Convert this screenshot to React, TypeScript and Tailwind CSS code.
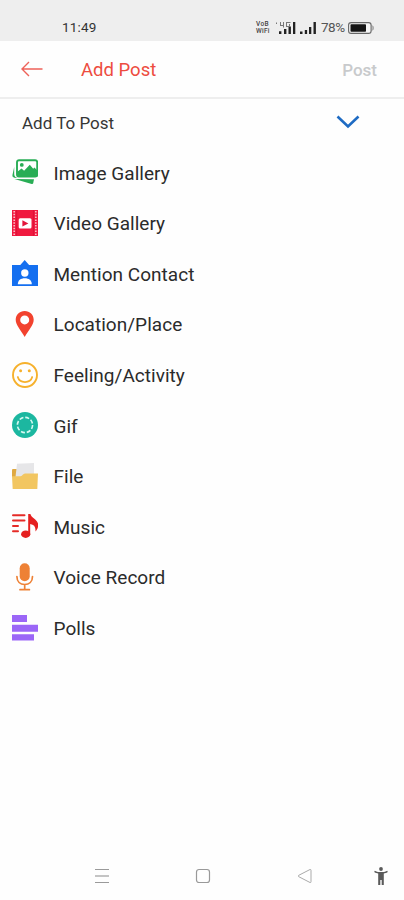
import React from 'react';

const ImageIcon = () => (
  <svg viewBox="0 0 26 26" className="h-[26px] w-[26px]">
    <path d="M2.200 8 .5 15.800c-.4 1.800.4 2.700 2 2.900l3.500.3C3.500 18.500 2.200 17.500 2.200 15z" fill="#28ad55" />
    <path d="M2.500 20 22 20.300 21.200 24.300C21 25 20.400 25.200 19.700 25Z" fill="#28ad55" />
    <rect x="5" y="1.200" width="20.200" height="16.400" rx="2" fill="#fff" stroke="#28ad55" strokeWidth="1.900" />
    <circle cx="9.800" cy="5.900" r="1.900" fill="#28ad55" />
    <path d="M5 13 9.500 9.500l2.600 2.200 5.700-6 3.400 4 1.200-1.100 3 3V18H5z" fill="#28ad55" />
  </svg>
);

const VideoIcon = () => (
  <svg viewBox="0 0 26 26" className="h-[26px] w-[26px]">
    <path d="M0 0h26v26H0z" fill="#f0193f" />
    <path d="M2.200 1v25M23.800 1v25" stroke="#ffb9c5" strokeWidth="1.700" strokeDasharray="1.500 1.300" />
    <path d="M4.600 0v26M21.400 0v26" stroke="#d60f35" strokeWidth=".7" />
    <rect x="6.700" y="8.200" width="12.800" height="10.200" rx="1.500" fill="#fff" />
    <path d="m10.400 10.200 6 3.200-6 3.200z" fill="#e3173c" />
  </svg>
);

const ContactIcon = () => (
  <svg viewBox="0 0 26 26" className="h-[26px] w-[26px]">
    <path d="M0 5h8.300L12.700 0l4.400 5H26v21H0z" fill="#146ff0" />
    <circle cx="12.800" cy="13" r="3.700" fill="#fff" />
    <path d="M5.800 24.300c0-4 3-6 7-6s7 2 7 6z" fill="#fff" />
  </svg>
);

const LocationIcon = () => (
  <svg viewBox="0 0 26 26" className="h-[26px] w-[26px]">
    <path
      fillRule="evenodd"
      d="M12.700 0C7.600 0 3.700 3.800 3.700 8.800c0 5.200 5.200 10.400 9 17.200 3.800-6.800 9-12 9-17.200 0-5-3.900-8.800-9-8.800m0 4.400a4.500 4.500 0 1 1 0 9 4.500 4.500 0 0 1 0-9"
      fill="#f2422e"
    />
  </svg>
);

const SmileIcon = () => (
  <svg viewBox="0 0 26 26" className="h-[26px] w-[26px]" fill="none" stroke="#f6b12d">
    <circle cx="13" cy="13" r="12" strokeWidth="1.900" />
    <path d="M5.800 15c1.900 6.700 12.500 6.700 14.400 0" strokeWidth="1.800" strokeLinecap="round" />
    <circle cx="8.600" cy="8.800" r="1.500" fill="#f6b12d" stroke="none" />
    <circle cx="17.300" cy="8.800" r="1.500" fill="#f6b12d" stroke="none" />
  </svg>
);

const GifIcon = () => (
  <svg viewBox="0 0 26 26" className="h-[26px] w-[26px]">
    <circle cx="13" cy="13" r="13" fill="#1cb7a0" />
    <circle cx="13" cy="13" r="7.600" fill="none" stroke="#d5f8f1" strokeWidth="1.600" strokeDasharray="4.100 1.870" />
  </svg>
);

const FileIcon = () => (
  <svg viewBox="0 0 26 26" className="h-[26px] w-[26px]">
    <path d="M0 7.200C0 6.400.5 6 1.300 6H5v8H0z" fill="#dfa942" />
    <path d="M5 .7 22 0v14H3.500z" fill="#e6e6e8" />
    <path d="M0 13.200h8.500c2 0 2.500-2.700 4.500-2.700h13L25.300 26H.7z" fill="#f2c661" />
  </svg>
);

const MusicIcon = () => (
  <svg viewBox="0 0 26 26" className="h-[26px] w-[26px]">
    <path d="M1 2.200h11.500M1 7.500h11.500M1 13h5M1 18.200h5" stroke="#e52b27" strokeWidth="2" strokeLinecap="round" />
    <ellipse cx="13.700" cy="21.200" rx="4.600" ry="3.700" fill="#e52020" />
    <path d="M16.200 1h2.200c.8 4.200 7.800 5.400 7.800 11 0 2.600-.9 4.600-2.800 6.500.5-4.300-1.200-6.900-5.200-7.400v10.500h-2z" fill="#e52020" />
  </svg>
);

const MicIcon = () => (
  <svg viewBox="0 0 26 28" className="-my-px h-[28px] w-[26px]">
    <rect x="7.700" y=".3" width="10" height="18" rx="5" fill="#ee8135" />
    <path d="M4.900 13.500c0 5 3.300 8 7.800 8s7.800-3 7.800-8M12.700 21.500v5M8 26.700h9.400" fill="none" stroke="#ee8135" strokeWidth="1.700" strokeLinecap="round" />
  </svg>
);

const PollsIcon = () => (
  <svg viewBox="0 0 26 26" className="h-[26px] w-[26px]" fill="#9b66f7">
    <path d="M0 0h15v7H0zM0 9.800h26v6.900H0zM0 19.300h22v6.200H0z" />
  </svg>
);

const options = [
  { label: 'Image Gallery', icon: ImageIcon },
  { label: 'Video Gallery', icon: VideoIcon },
  { label: 'Mention Contact', icon: ContactIcon },
  { label: 'Location/Place', icon: LocationIcon },
  { label: 'Feeling/Activity', icon: SmileIcon },
  { label: 'Gif', icon: GifIcon },
  { label: 'File', icon: FileIcon },
  { label: 'Music', icon: MusicIcon },
  { label: 'Voice Record', icon: MicIcon },
  { label: 'Polls', icon: PollsIcon }
];

const StatusBar: React.FC = () => (
  <div className="flex h-[41px] items-center bg-[#eeeeee] pt-[14px] pl-[62px] text-[#333]">
    <span className="w-[194px] text-[13.5px] leading-none tracking-[0.2px]">11:49</span>
    <div className="flex w-[16px] flex-col text-[6.500px] leading-[6.500px] font-medium text-[#444]">
      <span className="tracking-[0.4px]">VoB</span>
      <span className="tracking-[0.3px]">WiFi</span>
    </div>
    <svg viewBox="0 0 45 14" className="ml-1 h-[14px] w-[45px]" fill="#222">
      <path d="M3 10.200h2.400V13H3zM8 8h2.400v5H8zM12.500 5.500h2.400V13h-2.400zM17 1h2.300v12H17z" />
      <path d="M0 1.500h1V3H0zM4 1h1v3h2V1h1v5.500H7V5H4zM10 1h4.500v1H11v3h2V3h1v3h-4z" fill="#777" />
      <path d="M24 10.500h2.500V13H24zM28.800 9h2.300v4h-2.300zM33 6h2.300v7H33zM37.500 1h2.400v12h-2.400z" />
    </svg>
    <span className="w-[26px] text-[13.500px] leading-none tracking-[-0.5px] text-[#555]">78%</span>
    <svg viewBox="0 0 26 12" className="ml-px h-3 w-[26px]">
      <rect x=".6" y=".6" width="22.500" height="10.800" rx="2.500" fill="#f5f5f5" stroke="#666" strokeWidth="1.100" />
      <rect x="2.500" y="2.200" width="15.500" height="7.600" rx=".8" fill="#151515" />
      <path d="M24 3.500c1.500.5 1.500 4.500 0 5" fill="none" stroke="#777" />
    </svg>
  </div>
);

const NavBar: React.FC = () => (
  <div className="mt-auto flex h-[50px] items-center bg-[#fefefe] pt-px pl-[94px]">
    <svg viewBox="0 0 16 16" className="h-4 w-4" stroke="#9a9a9a" strokeWidth="1.200">
      <path d="M1 1.500h14M1 14.500h14" />
      <path d="M1 8h14" stroke="#c4c4c4" strokeWidth="2" />
    </svg>
    <svg viewBox="0 0 16 16" className="ml-[85px] h-4 w-4" fill="none" stroke="#999">
      <rect x="1.500" y="1.500" width="13" height="13" rx="2.500" strokeWidth="1.200" />
    </svg>
    <svg viewBox="0 0 16 16" className="ml-[86px] h-4 w-4" fill="none" stroke="#aaa">
      <path d="M13 1.500 1.600 7.400q-.9.600 0 1.200L13 14.500q1 .3 1-.8V2.300q0-1-1-.8z" />
    </svg>
    <svg viewBox="0 0 14 18" className="ml-[61px] h-[18px] w-[14px]" fill="#5a5a5a">
      <circle cx="7" cy="2" r="1.900" />
      <path d="M.8 3.700C3 5 5 5 7 5s4 0 6.200-1.300l.6 1.400c-1.600 1-2.800 1.300-4 1.500V18H7.700v-5H6.300v5H4.200V6.600c-1.200-.2-2.400-.5-4-1.500z" />
    </svg>
  </div>
);

export default function App() {
  return (
    <div className="flex h-[900px] w-[404px] flex-col overflow-hidden bg-[#fefefe] font-['Roboto',sans-serif]">
      <StatusBar />

      <header className="flex h-[58px] items-center border-b-2 border-[#eeeeee] pl-[21px]">
        <svg viewBox="0 0 22 16" className="h-4 w-[22px]" fill="none" stroke="#ee6259" strokeWidth="1.400">
          <path d="M21.500 8H1M8 1 1 8l7 7" />
        </svg>
        <h1 className="ml-[38px] pt-[2px] text-[18.500px] leading-none text-[#ed4c40]">Add Post</h1>
        <button className="mr-[27px] ml-auto pt-[2px] text-[17px] leading-none font-medium text-[#c8cacc]">Post</button>
      </header>

      <button className="flex h-12 items-center justify-between pr-[44px] pl-[22px] text-left">
        <span className="text-[17px] leading-none text-[#363636]">Add To Post</span>
        <svg viewBox="0 0 24 14" className="-mt-[2px] h-[14px] w-6" fill="none" stroke="#1e6bc3" strokeWidth="2.600">
          <path d="m1.500 1.500 10.500 10 10.500-10" />
        </svg>
      </button>

      <ul className="flex flex-col">
        {options.map(({ label, icon: Icon }) => (
          <li key={label} className="flex h-[50.6px] items-center gap-[15.500px] pl-3">
            <Icon />
            <span className="pt-[1.500px] text-[19px] leading-none tracking-[0.03px] text-[#2b2b2b]">{label}</span>
          </li>
        ))}
      </ul>

      <NavBar />
    </div>
  );
}
